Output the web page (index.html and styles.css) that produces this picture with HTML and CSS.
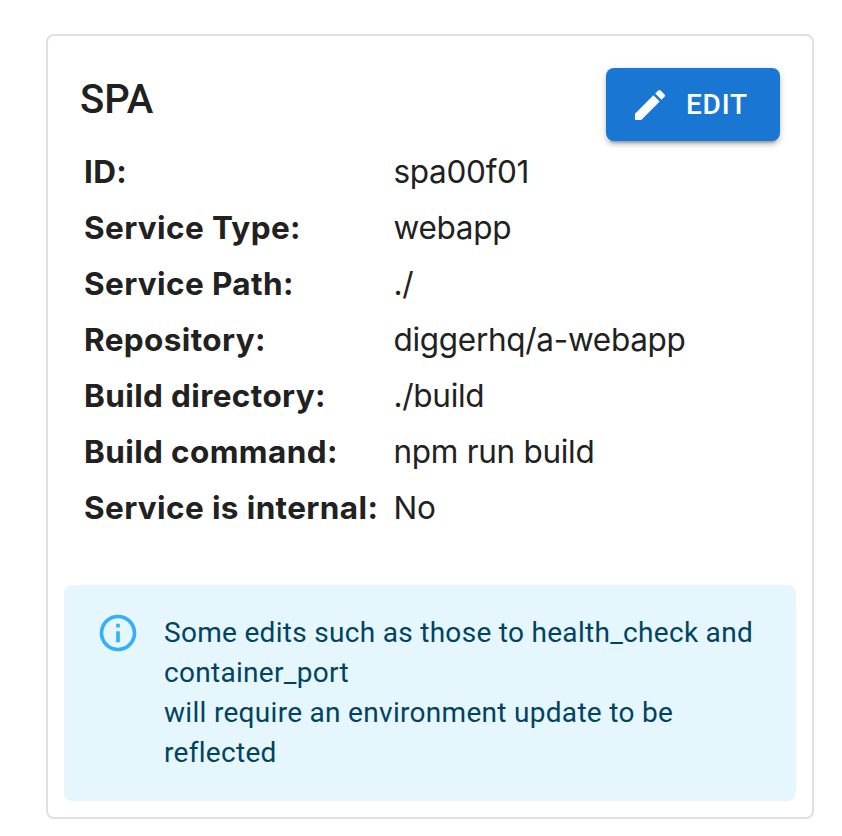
FILE: index.html
```html
<!DOCTYPE html>
<html lang="en">
<head>
<meta charset="utf-8">
<title>SPA</title>
<link rel="stylesheet" href="styles.css">
</head>
<body>
<main class="card">
  <header class="card-header">
    <h1 class="title">SPA</h1>
    <button class="edit-button" type="button">
      <svg class="edit-icon" viewBox="0 0 24 24" aria-hidden="true"><path d="M3 17.25V21h3.75L17.81 9.94l-3.75-3.75L3 17.25zM20.71 7.04c.39-.39.39-1.02 0-1.41l-2.34-2.34a.9959.9959 0 0 0-1.41 0l-1.83 1.83 3.75 3.75 1.83-1.83z"/></svg>
      <span>EDIT</span>
    </button>
  </header>
  <dl class="details">
    <dt>ID:</dt><dd>spa00f01</dd>
    <dt>Service Type:</dt><dd>webapp</dd>
    <dt>Service Path:</dt><dd>./</dd>
    <dt>Repository:</dt><dd>diggerhq/a-webapp</dd>
    <dt>Build directory:</dt><dd>./build</dd>
    <dt>Build command:</dt><dd>npm run build</dd>
    <dt>Service is internal:</dt><dd>No</dd>
  </dl>
  <div class="alert">
    <svg class="alert-icon" viewBox="0 0 24 24" aria-hidden="true"><path d="M11,9H13V7H11M12,20C7.59,20 4,16.41 4,12C4,7.59 7.59,4 12,4C16.41,4 20,7.59 20,12C20,16.41 16.41,20 12,20M12,2A10,10 0 0,0 2,12A10,10 0 0,0 12,22A10,10 0 0,0 22,12A10,10 0 0,0 12,2M11,17H13V11H11V17Z"/></svg>
    <p class="alert-text">Some edits such as those to health_check and<br>container_port<br>will require an environment update to be<br>reflected</p>
  </div>
</main>
</body>
</html>
```

FILE: styles.css
```css
* { box-sizing: border-box; }
body { margin: 0; background: #fff; color: #212121; font-family: Inter, sans-serif; }
.card {
  width: 768px;
  height: 785px;
  margin: 34px 0 0 46px;
  border: 2px solid #e0e0e0;
  border-radius: 8px;
  padding: 32px 16px 16px;
}
.card-header { display: flex; justify-content: space-between; height: 76px; padding: 0 16px; }
.title { margin: 8px 0 0; font: 460 40px/48px Roboto, sans-serif; }
.edit-button {
  display: flex;
  align-items: center;
  width: 174px;
  height: 73px;
  padding: 0 0 0 24px;
  gap: 16px;
  border: 0;
  border-radius: 8px;
  background: #1976d2;
  color: #fff;
  font: 500 28px/49px Roboto, sans-serif;
  letter-spacing: 0.8px;
  box-shadow: 0 6px 2px -4px rgba(0,0,0,.2), 0 4px 4px rgba(0,0,0,.14), 0 2px 10px rgba(0,0,0,.12);
}
.edit-icon { width: 40px; height: 40px; fill: currentColor; }
.details {
  display: grid;
  grid-template-columns: 309.5px 1fr;
  grid-auto-rows: 56px;
  margin: 0;
  padding-left: 20px;
  font-size: 31.5px;
  line-height: 56px;
  white-space: nowrap;
}
.details dt { font-weight: 680; letter-spacing: .38px; }
.details dd { margin: 0; font-weight: 380; letter-spacing: -.3px; }
.alert {
  display: flex;
  height: 216px;
  margin-top: 49px;
  padding: 28px 32px;
  border-radius: 8px;
  background: #e5f6fd;
  color: #014361;
}
.alert-icon { width: 44px; height: 44px; margin-right: 24px; margin-top: -2px; fill: #34b0fa; }
.alert-text { margin: 0; font: 400 28px/40px Roboto, sans-serif; letter-spacing: .3px; white-space: nowrap; }
```
